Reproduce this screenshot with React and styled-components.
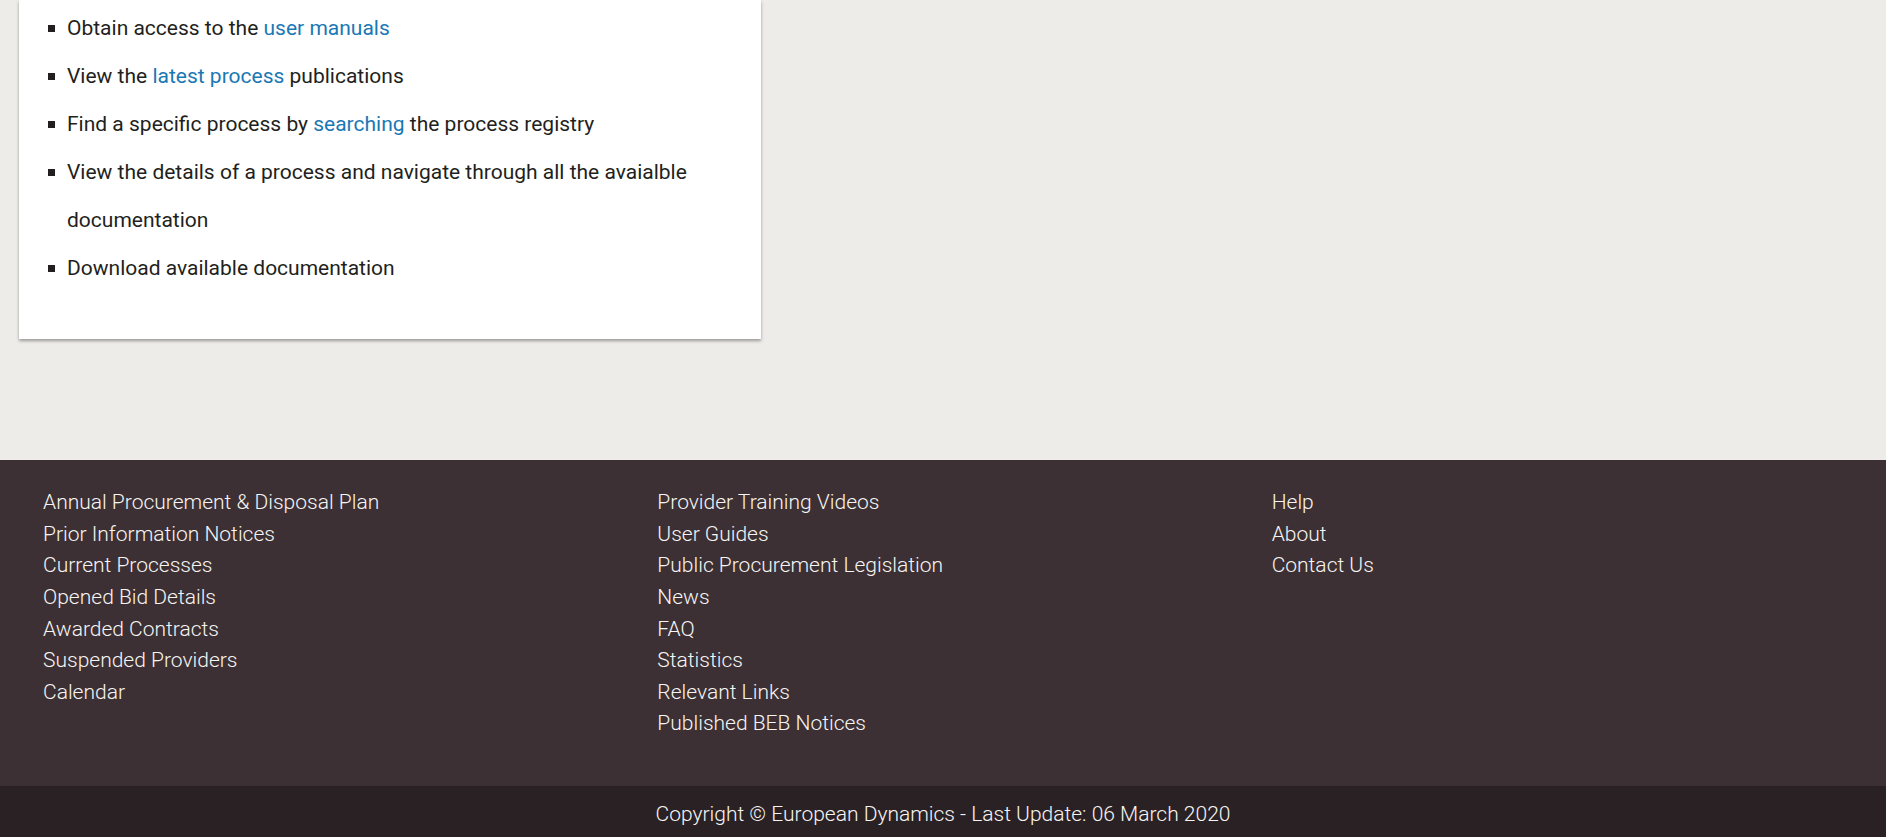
import React from 'react';
import styled, { createGlobalStyle } from 'styled-components';

const GlobalStyle = createGlobalStyle`
  html, body {
    margin: 0;
    padding: 0;
    background: #edece8;
  }
  body {
    font-family: Roboto, "Liberation Sans", Arial, sans-serif;
  }
`;

const Page = styled.div`
  display: flex;
  flex-direction: column;
  min-height: 100vh;
`;

// Area holding the info card
const Main = styled.main`
  flex: 1;
  padding: 0 0 120px 19px;
`;

const Card = styled.section`
  width: 742px;
  background: #fff;
  box-shadow: 0 2px 3px rgba(0, 0, 0, 0.35);
  padding: 4px 0 47px;
  box-sizing: border-box;
`;

const List = styled.ul`
  list-style: none;
  margin: 0;
  padding: 0 30px 0 29px;
`;

const Item = styled.li`
  display: flex;
  align-items: flex-start;
  font-size: 21px;
  line-height: 48px;
  color: #231f20;

  &::before {
    content: '';
    flex-shrink: 0;
    width: 7px;
    height: 7px;
    background: #231f20;
    margin: 21px 12px 0 0;
  }
`;

const Link = styled.a`
  color: #1a78b4;
  text-decoration: none;
`;

const Footer = styled.footer`
  background: #3c3034;
  padding: 27px 0 46px 43px;
  display: grid;
  grid-template-columns: repeat(3, 1fr);
`;

const Column = styled.ul`
  list-style: none;
  margin: 0;
  padding: 0;
`;

const FooterLink = styled.li`
  font-size: 21px;
  font-weight: 300;
  line-height: 31.6px;
  color: #f7f5f3;
`;

const BottomBar = styled.div`
  background: #2a2125;
  height: 51px;
  display: flex;
  align-items: center;
  justify-content: center;
  font-size: 21px;
  font-weight: 300;
  color: #f7f5f3;
  padding-top: 4px;
  box-sizing: border-box;
`;

const columns = [
  [
    'Annual Procurement & Disposal Plan',
    'Prior Information Notices',
    'Current Processes',
    'Opened Bid Details',
    'Awarded Contracts',
    'Suspended Providers',
    'Calendar',
  ],
  [
    'Provider Training Videos',
    'User Guides',
    'Public Procurement Legislation',
    'News',
    'FAQ',
    'Statistics',
    'Relevant Links',
    'Published BEB Notices',
  ],
  ['Help', 'About', 'Contact Us'],
];

const App = () => {
  return (
    <Page>
      <GlobalStyle />
      <Main>
        <Card>
          <List>
            <Item>
              <span>Obtain access to the <Link href="#">user manuals</Link></span>
            </Item>
            <Item>
              <span>View the <Link href="#">latest process</Link> publications</span>
            </Item>
            <Item>
              <span>Find a specific process by <Link href="#">searching</Link> the process registry</span>
            </Item>
            <Item>
              <span>View the details of a process and navigate through all the avaialble documentation</span>
            </Item>
            <Item>
              <span>Download available documentation</span>
            </Item>
          </List>
        </Card>
      </Main>
      <Footer>
        {columns.map((col, i) => (
          <Column key={i}>
            {col.map(label => (
              <FooterLink key={label}>{label}</FooterLink>
            ))}
          </Column>
        ))}
      </Footer>
      <BottomBar>Copyright © European Dynamics - Last Update: 06 March 2020</BottomBar>
    </Page>
  );
};

export default App;
